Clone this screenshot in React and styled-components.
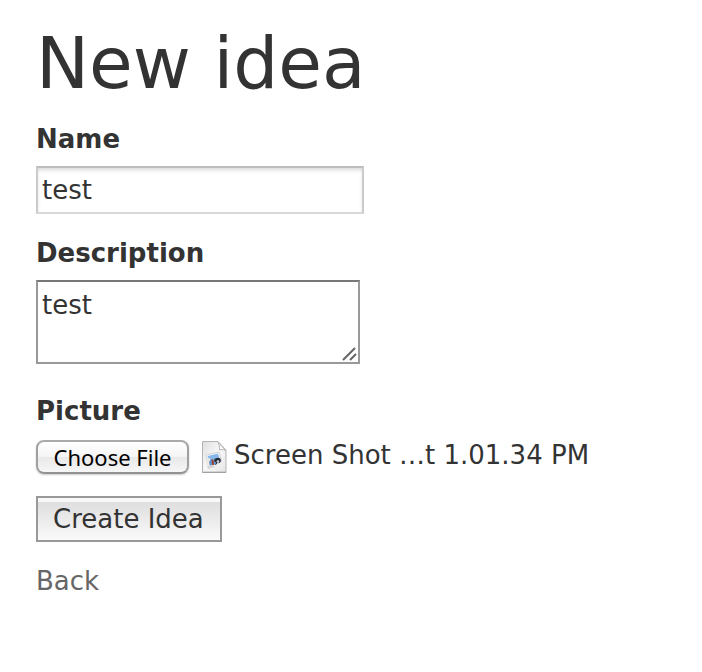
import React, { useRef, useState } from "react";
import styled, { createGlobalStyle } from "styled-components";

const GlobalStyle = createGlobalStyle`
  *, *::before, *::after { box-sizing: border-box; }
  body {
    margin: 0;
    background: #fff;
    color: #333;
    font: 26px/36px Verdana, "DejaVu Sans", sans-serif;
  }
`;

const Page = styled.main`
  padding: 22px 36px;
`;

const Title = styled.h1`
  margin: 0 0 15px;
  font-size: 71px;
  line-height: 84px;
  font-weight: 400;
`;

const Form = styled.form`
  display: flex;
  flex-direction: column;
  align-items: flex-start;
`;

const Field = styled.div`
  display: flex;
  flex-direction: column;
  align-items: flex-start;
  gap: ${(p) => p.$gap || 9}px;
  margin-bottom: ${(p) => p.$after || 21}px;
  max-width: 100%;
`;

const Label = styled.label`
  font-weight: 700;
`;

const TextInput = styled.input`
  width: 328px;
  max-width: 100%;
  height: 48px;
  padding: 0 4px;
  border: 2px solid #cbcbcb;
  border-top-color: #bdbdbd;
  border-bottom-color: #d8d8d8;
  border-radius: 0;
  outline: none;
  background: #fff;
  box-shadow: inset 0 3px 4px -1px #d8d8d8;
  color: inherit;
  font: inherit;
`;

const AreaFrame = styled.div`
  position: relative;
  display: flex;
  max-width: 100%;
`;

const TextArea = styled.textarea`
  width: 324px;
  max-width: 100%;
  height: 84px;
  padding: 7px 4px 4px;
  border: 2px solid #999;
  border-top-color: #777;
  border-radius: 0;
  outline: none;
  resize: none;
  background: #fff;
  color: inherit;
  font: inherit;
  line-height: 32px;
`;

const Grip = styled.svg`
  position: absolute;
  right: 2px;
  bottom: 2px;
  pointer-events: none;
`;

const FileRow = styled.div`
  display: flex;
  align-items: center;
  flex-wrap: wrap;
`;

const ChooseButton = styled.button`
  height: 34px;
  width: 153px;
  margin-right: 13px;
  padding: 0;
  border: 2px solid #a0a0a0;
  border-top-color: #aaa;
  border-bottom-color: #929292;
  border-radius: 8px;
  background: linear-gradient(#fff, #f5f5f5 48%, #e9e9e9 52%, #f6f6f6);
  box-shadow: 0 1px 2px #ccc;
  color: #000;
  font: 22px/30px "Lucida Grande", "Noto Sans", sans-serif;
  white-space: nowrap;
`;

const FileName = styled.span`
  margin-left: 7px;
  line-height: 30px;
  margin-bottom: 4px;
`;

const SubmitButton = styled.button`
  height: 46px;
  padding: 0 16px 0 15px;
  border: 2px solid #999;
  border-radius: 0;
  background: linear-gradient(#f8f8f8 4px, #dedede 4px, #fafafa);
  color: inherit;
  font: inherit;
`;

const BackLink = styled.a`
  display: inline-block;
  margin-top: 21px;
  color: #666;
  text-decoration: none;
`;

function ImageFileIcon() {
  return (
    <svg width="25" height="32" viewBox="0 0 25 32" aria-hidden="true">
      <defs>
        <linearGradient id="paper" x1="0" y1="0" x2="1" y2="1">
          <stop offset="0" stopColor="#dedede" />
          <stop offset="0.5" stopColor="#f8f8f8" />
          <stop offset="1" stopColor="#e4e4e4" />
        </linearGradient>
      </defs>
      <path d="M.5 .5H16L24 9V31.5H.5Z" fill="url(#paper)" stroke="#b4b4b4" />
      <path d="M.5 31.2H24" stroke="#999" />
      <path d="M16 1L23.500 9.5Q20 7.500 17.500 9Q18 5 16 1Z" fill="#fff" stroke="#b8b8b8" />
      <path d="M4 14L17 11L19.500 20L7 24Z" fill="#fff" stroke="#d0d0d0" />
      <path d="M5.500 15L16 12.500L18 19L8 21Z" fill="#86b8ec" />
      <path d="M3.500 20L8 17L10 22L5 25Z" fill="#efe9e2" />
      <path d="M7 21L9 18L13 20L14 23L8 25Z" fill="#5b94d6" />
      <path d="M9.500 18L11.500 19L12 24L10 24Z" fill="#a3442d" />
      <path d="M12 18L15 17L15 23L13 24Z" fill="#34404e" />
      <circle cx="16" cy="19.500" r="2.800" fill="#262d36" />
      <circle cx="16" cy="20.500" r="1.300" fill="#d5e0ea" />
      <circle cx="13" cy="22" r="1" fill="#6da5df" />
      <path d="M5 25L11 24L13 26L6 28Z" fill="#d6d6d6" />
    </svg>
  );
}

export default function App() {
  const picker = useRef(null);
  const [fileName, setFileName] = useState("Screen Shot …t 1.01.34 PM");

  return (
    <>
      <GlobalStyle />
      <Page>
        <Title>New idea</Title>
        <Form onSubmit={(e) => e.preventDefault()}>
          <Field>
            <Label htmlFor="name">Name</Label>
            <TextInput id="name" type="text" defaultValue="test" />
          </Field>
          <Field $after={29}>
            <Label htmlFor="description">Description</Label>
            <AreaFrame>
              <TextArea id="description" defaultValue="test" />
              <Grip width="16" height="16" viewBox="0 0 16 16" aria-hidden="true">
                <path d="M1 14L13 2M8 14L14 8" fill="none" stroke="#666" strokeWidth="2" />
              </Grip>
            </AreaFrame>
          </Field>
          <Field $gap={11} $after={22}>
            <Label htmlFor="choose">Picture</Label>
            <FileRow>
              <input
                ref={picker}
                type="file"
                accept="image/*"
                hidden
                onChange={(e) => e.target.files[0] && setFileName(e.target.files[0].name)}
              />
              <ChooseButton id="choose" type="button" onClick={() => picker.current.click()}>
                Choose File
              </ChooseButton>
              <ImageFileIcon />
              <FileName>{fileName}</FileName>
            </FileRow>
          </Field>
          <SubmitButton type="submit">Create Idea</SubmitButton>
        </Form>
        <BackLink href="#ideas">Back</BackLink>
      </Page>
    </>
  );
}
